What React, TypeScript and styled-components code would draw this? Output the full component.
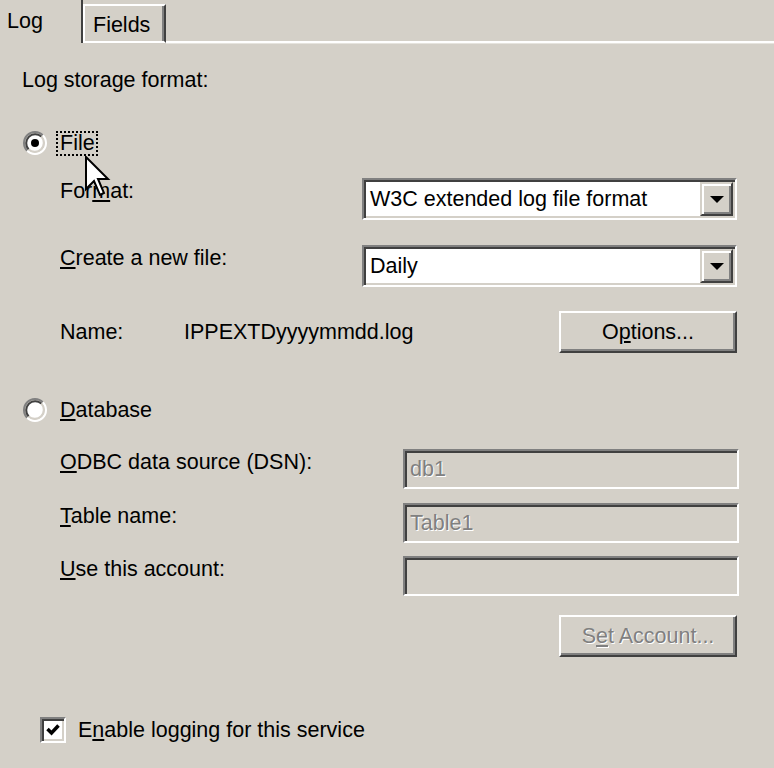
import React from 'react';
import styled, { createGlobalStyle, css } from 'styled-components';

const GlobalStyle = createGlobalStyle`
  html, body {
    margin: 0;
    padding: 0;
    background: #d4d0c8;
  }
  body {
    font-family: "Liberation Sans", Arial, sans-serif;
    font-size: 21.5px;
    color: #000;
  }
`;

const sunken = css`
  border: 2px solid;
  border-color: #808080 #ffffff #ffffff #808080;
  box-shadow: inset 2px 2px #404040, inset -2px -2px #d4d0c8;
`;

const raised = css`
  border: 2px solid;
  border-color: #ffffff #404040 #404040 #ffffff;
  box-shadow: inset -2px -2px #808080, inset 2px 2px #d4d0c8;
`;

const Dialog = styled.div`
  position: relative;
  width: 774px;
  height: 768px;
  overflow: hidden;
  background: #d4d0c8;
  display: flex;
  flex-direction: column;
`;

const TabStrip = styled.div`
  display: flex;
  align-items: flex-end;
  height: 43px;
`;

const Tab = styled.div<{ $active?: boolean }>`
  box-sizing: border-box;
  width: 83px;
  line-height: 26px;
  white-space: nowrap;
  ${(p) =>
    p.$active
      ? css`
          height: 43px;
          padding: 8px 0 0 7px;
          border-right: 2px solid #404040;
        `
      : css`
          height: 39px;
          padding: 6px 0 0 8px;
          border-top: 2px solid #ffffff;
          border-left: 2px solid #ffffff;
          border-right: 2px solid #404040;
          border-bottom: 2px solid #ffffff;
          box-shadow: inset -2px 0 #808080;
        `}
`;

const TabFiller = styled.div`
  flex: 1;
  height: 2px;
  background: #ffffff;
  box-shadow: 0 1px #e6e4de;
`;

const Heading = styled.div`
  margin: 24px 0 0 22px;
  line-height: 26px;
`;

const RadioRow = styled.div<{ $mt: number }>`
  display: flex;
  align-items: center;
  gap: 9px;
  height: 26px;
  margin-top: ${(p) => p.$mt}px;
  padding-left: 23px;
`;

const RadioLabel = styled.span<{ $focused?: boolean }>`
  box-sizing: border-box;
  height: 25px;
  padding: 0 1px 0 2px;
  line-height: 21px;
  border: 2px dotted ${(p) => (p.$focused ? '#000' : 'transparent')};
`;

const FieldRow = styled.div<{ $mt: number; $center?: boolean }>`
  display: flex;
  align-items: ${(p) => (p.$center ? 'center' : 'flex-start')};
  margin-top: ${(p) => p.$mt}px;
  padding: 0 37px 0 60px;
`;

const Label = styled.span`
  flex: 1;
  line-height: 26px;
  white-space: nowrap;
`;

const NameLabel = styled.span`
  width: 124px;
  line-height: 26px;
`;

const NameValue = styled.span`
  flex: 1;
  line-height: 26px;
`;

const Combo = styled.div`
  box-sizing: border-box;
  display: flex;
  align-items: center;
  width: 375px;
  height: 42px;
  background: #ffffff;
  ${sunken}
`;

const ComboText = styled.span`
  flex: 1;
  padding-left: 6px;
  line-height: 26px;
  white-space: nowrap;
`;

const DropButton = styled.span`
  box-sizing: border-box;
  display: flex;
  align-items: center;
  justify-content: center;
  width: 33px;
  height: 34px;
  margin-right: 2px;
  background: #d4d0c8;
  border: 2px solid;
  border-color: #d4d0c8 #404040 #404040 #d4d0c8;
  box-shadow: inset 2px 2px #ffffff, inset -2px -2px #808080;
`;

const TextBox = styled.div`
  box-sizing: border-box;
  display: flex;
  align-items: center;
  width: 336px;
  height: 40px;
  margin-right: -2px;
  padding-left: 5px;
  background: #d4d0c8;
  color: #808080;
  text-shadow: 1px 1px 0 #ffffff;
  line-height: 26px;
  ${sunken}
`;

const ButtonRow = styled.div<{ $mt: number }>`
  display: flex;
  justify-content: flex-end;
  margin-top: ${(p) => p.$mt}px;
  padding-right: 37px;
`;

const PushButton = styled.button<{ $disabled?: boolean }>`
  box-sizing: border-box;
  width: 178px;
  height: 42px;
  padding: 0;
  background: #d4d0c8;
  font: inherit;
  line-height: 26px;
  color: ${(p) => (p.$disabled ? '#808080' : '#000')};
  text-shadow: ${(p) => (p.$disabled ? '1px 1px 0 #ffffff' : 'none')};
  ${raised}
`;

const CheckRow = styled.div`
  display: flex;
  align-items: center;
  gap: 12px;
  height: 26px;
  margin-top: 60px;
  padding-left: 40px;
`;

const CheckBox = styled.span`
  box-sizing: border-box;
  display: flex;
  width: 26px;
  height: 26px;
  padding: 2px;
  background: #ffffff;
  ${sunken}
`;

const Key = styled.span`
  text-decoration: underline;
  text-underline-offset: 2px;
`;

const Cursor = styled.svg`
  position: absolute;
  left: 85px;
  top: 156px;
`;

function Radio({ checked }: { checked?: boolean }) {
  return (
    <svg width="24" height="24" viewBox="0 0 24 24">
      <circle cx="12" cy="12" r="9" fill="#fff" />
      <path d="M4.22 19.78 A11 11 0 0 1 19.78 4.22" fill="none" stroke="#808080" strokeWidth="2" />
      <path d="M19.78 4.22 A11 11 0 0 1 4.22 19.78" fill="none" stroke="#fff" strokeWidth="2" />
      <path d="M5.64 18.36 A9 9 0 0 1 18.36 5.64" fill="none" stroke="#404040" strokeWidth="2" />
      <path d="M18.36 5.64 A9 9 0 0 1 5.64 18.36" fill="none" stroke="#d4d0c8" strokeWidth="2" />
      {checked && <circle cx="12" cy="12" r="4" fill="#000" />}
    </svg>
  );
}

function Arrow() {
  return (
    <svg width="14" height="7" viewBox="0 0 14 7">
      <polygon points="0,0 14,0 7,7" fill="#000" />
    </svg>
  );
}

export default function App() {
  return (
    <>
      <GlobalStyle />
      <Dialog>
        <TabStrip>
          <Tab $active>Log</Tab>
          <Tab>Fields</Tab>
          <TabFiller />
        </TabStrip>

        <Heading>Log storage format:</Heading>

        <RadioRow $mt={37}>
          <Radio checked />
          <RadioLabel $focused>File</RadioLabel>
        </RadioRow>

        <FieldRow $mt={22}>
          <Label>
            For<Key>m</Key>at:
          </Label>
          <Combo>
            <ComboText>W3C extended log file format</ComboText>
            <DropButton>
              <Arrow />
            </DropButton>
          </Combo>
        </FieldRow>

        <FieldRow $mt={25}>
          <Label>
            <Key>C</Key>reate a new file:
          </Label>
          <Combo>
            <ComboText>Daily</ComboText>
            <DropButton>
              <Arrow />
            </DropButton>
          </Combo>
        </FieldRow>

        <FieldRow $mt={24} $center>
          <NameLabel>Name:</NameLabel>
          <NameValue>IPPEXTDyyyymmdd.log</NameValue>
          <PushButton>
            O<Key>p</Key>tions...
          </PushButton>
        </FieldRow>

        <RadioRow $mt={44}>
          <Radio />
          <RadioLabel>
            <Key>D</Key>atabase
          </RadioLabel>
        </RadioRow>

        <FieldRow $mt={26}>
          <Label>
            <Key>O</Key>DBC data source (DSN):
          </Label>
          <TextBox>db1</TextBox>
        </FieldRow>

        <FieldRow $mt={14}>
          <Label>
            <Key>T</Key>able name:
          </Label>
          <TextBox>Table1</TextBox>
        </FieldRow>

        <FieldRow $mt={13}>
          <Label>
            <Key>U</Key>se this account:
          </Label>
          <TextBox />
        </FieldRow>

        <ButtonRow $mt={19}>
          <PushButton $disabled>
            S<Key>e</Key>t Account...
          </PushButton>
        </ButtonRow>

        <CheckRow>
          <CheckBox>
            <svg width="18" height="18" viewBox="0 0 18 18">
              <polyline points="3.5,8 7.5,12 14.5,4.5" fill="none" stroke="#000" strokeWidth="3.5" />
            </svg>
          </CheckBox>
          <span>
            E<Key>n</Key>able logging for this service
          </span>
        </CheckRow>

        <Cursor width="26" height="42" viewBox="0 0 13 21">
          <polygon
            points="0.5,0.5 0.5,16.5 4.5,12.5 7.5,19.5 9.5,18.5 6.5,11.5 11.5,11.5"
            fill="#fff"
            stroke="#000"
            strokeWidth="1"
            strokeLinejoin="miter"
          />
        </Cursor>
      </Dialog>
    </>
  );
}
